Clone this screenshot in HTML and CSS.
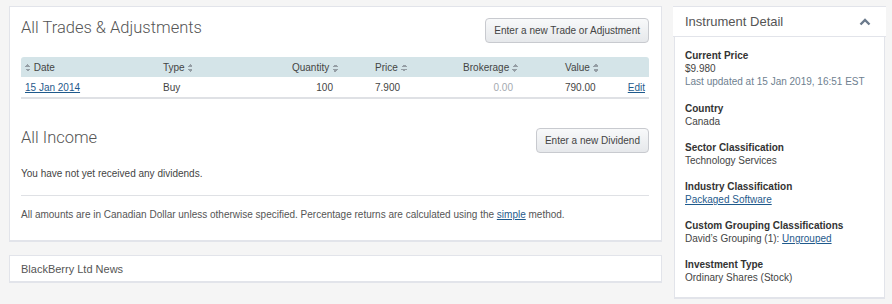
FILE: index.html
```html
<!DOCTYPE html>
<html lang="en">
<head>
  <meta charset="UTF-8">
  <title>BlackBerry Ltd</title>
  <link rel="stylesheet" href="styles.css">
</head>
<body>
  <div class="layout">
    <div class="main-col">
      <div class="panel">
        <div class="section-head">
          <h2>All Trades &amp; Adjustments</h2>
          <button class="btn">Enter a new Trade or Adjustment</button>
        </div>
        <table class="trades">
          <thead>
            <tr>
              <th class="c-date"><i class="sort"></i> Date</th>
              <th class="c-type">Type <i class="sort"></i></th>
              <th class="c-qty num">Quantity <i class="sort"></i></th>
              <th class="c-price">Price <i class="sort"></i></th>
              <th class="c-brok num">Brokerage <i class="sort"></i></th>
              <th class="c-value">Value <i class="sort"></i></th>
              <th class="c-edit"></th>
            </tr>
          </thead>
          <tbody>
            <tr>
              <td class="c-date"><a href="#">15 Jan 2014</a></td>
              <td class="c-type">Buy</td>
              <td class="c-qty num">100</td>
              <td class="c-price">7.900</td>
              <td class="c-brok num muted">0.00</td>
              <td class="c-value">790.00</td>
              <td class="c-edit"><a href="#">Edit</a></td>
            </tr>
          </tbody>
        </table>

        <div class="section-head income-head">
          <h2>All Income</h2>
          <button class="btn">Enter a new Dividend</button>
        </div>
        <p class="empty">You have not yet received any dividends.</p>
        <p class="note">All amounts are in Canadian Dollar unless otherwise specified. Percentage returns are calculated using the <a href="#">simple</a> method.</p>
      </div>

      <div class="panel news">BlackBerry Ltd News</div>
    </div>

    <div class="side-col">
      <div class="side-head">
        <span>Instrument Detail</span>
        <svg class="chevron" width="12" height="8" viewBox="0 0 12 8">
          <path d="M1.5 6.5 L6 2 L10.5 6.5" fill="none" stroke="#6b7a8c" stroke-width="2.4"/>
        </svg>
      </div>
      <div class="side-body">
        <dl>
          <dt>Current Price</dt>
          <dd>$9.980<br><span class="updated">Last updated at 15 Jan 2019, 16:51 EST</span></dd>
          <dt>Country</dt>
          <dd>Canada</dd>
          <dt>Sector Classification</dt>
          <dd>Technology Services</dd>
          <dt>Industry Classification</dt>
          <dd><a href="#">Packaged Software</a></dd>
          <dt>Custom Grouping Classifications</dt>
          <dd>David’s Grouping (1): <a href="#">Ungrouped</a></dd>
          <dt>Investment Type</dt>
          <dd>Ordinary Shares (Stock)</dd>
        </dl>
      </div>
    </div>
  </div>
</body>
</html>
```

FILE: styles.css
```css
body {
  margin: 0;
  padding: 6px 6px 0 9px;
  background-color: #f5f5f5;
  font-family: "Liberation Sans", Arial, sans-serif;
  font-size: 10px;
  color: #444;
}
a {
  color: #1f5a8c;
}
.layout {
  display: flex;
  gap: 11px;
  align-items: flex-start;
}
.main-col {
  width: 653px;
}
.panel {
  background-color: white;
  border: 1px solid #e2e4ea;
  border-bottom-width: 2px;
  padding: 0 12px 19px 11px;
}
.section-head {
  display: flex;
  justify-content: space-between;
  align-items: flex-start;
  padding-top: 11px;
}
.section-head h2 {
  margin: 1px 0 0;
  font-family: Roboto, "Liberation Sans", sans-serif;
  font-weight: 300;
  font-size: 16.5px;
  line-height: 18px;
  color: #555;
}
.btn {
  font-family: "Liberation Sans", Arial, sans-serif;
  font-size: 10px;
  color: #444;
  height: 25px;
  padding: 0 8px;
  border: 1px solid #c8cacf;
  border-radius: 4px;
  background: linear-gradient(#f8f9fa, #e6e8eb);
}
.trades {
  width: 100%;
  table-layout: fixed;
  border-collapse: collapse;
  margin-top: 14px;
  white-space: nowrap;
}
.trades th,
.trades td {
  box-sizing: border-box;
  padding: 0 4px;
}
.trades th {
  background-color: #d4e4e8;
  font-weight: normal;
  height: 20px;
  text-align: left;
}
.trades th:first-child {
  border-radius: 3px 0 0 0;
}
.trades th:last-child {
  border-radius: 0 3px 0 0;
}
.trades td {
  height: 21px;
  border-bottom: 2px solid #dfe1e5;
}
.trades .num {
  text-align: right;
}
.trades td.num {
  padding-right: 9px;
}
/* up/down sort arrows */
.sort {
  display: inline-block;
  width: 6px;
  height: 8px;
  vertical-align: -1px;
  background:
    linear-gradient(to bottom right, transparent 50%, #959ea5 50%) 0 0 / 3px 3px no-repeat,
    linear-gradient(to bottom left, transparent 50%, #959ea5 50%) 3px 0 / 3px 3px no-repeat,
    linear-gradient(to top right, transparent 50%, #959ea5 50%) 0 5px / 3px 3px no-repeat,
    linear-gradient(to top left, transparent 50%, #959ea5 50%) 3px 5px / 3px 3px no-repeat;
}
.c-date { width: 138px; }
.c-type { width: 96px; }
.c-qty { width: 87px; }
.c-price { width: 90px; padding-left: 33px !important; }
.c-brok { width: 90px; }
.c-value { width: 88px; padding-left: 43px !important; }
.c-edit { text-align: right; }
.muted {
  color: #a4aab0;
}
.income-head {
  padding-top: 29px;
}
.empty {
  margin: 15px 0 0;
  line-height: 12px;
  padding-bottom: 15px;
  border-bottom: 1px solid #dfe1e5;
}
.note {
  margin: 13px 0 0;
  line-height: 12px;
  color: #555;
}
.news {
  margin-top: 13px;
  padding: 7px 11px 6px;
  font-size: 11px;
  line-height: 12px;
  color: #555;
}
.side-col {
  width: 213px;
}
.side-head {
  display: flex;
  justify-content: space-between;
  align-items: center;
  background-color: white;
  border-top: 1px solid #e2e4ea;
  border-bottom: 1px solid #e2e4ea;
  height: 29px;
  padding: 0 15px 0 12px;
  font-size: 13px;
  color: #555;
}
.side-body {
  background-color: white;
  border: 1px solid #e2e4ea;
  border-top: none;
  border-bottom-width: 2px;
  margin: 0 1px;
  padding: 12px 10px 13px;
}
dl {
  margin: 0;
  line-height: 13px;
}
dt {
  font-weight: bold;
  color: #333;
}
dd {
  margin: 0 0 13px;
}
dd:first-of-type {
  margin-bottom: 14px;
}
dd:last-child {
  margin-bottom: 0;
}
.updated {
  color: #6f7f90;
}
```
